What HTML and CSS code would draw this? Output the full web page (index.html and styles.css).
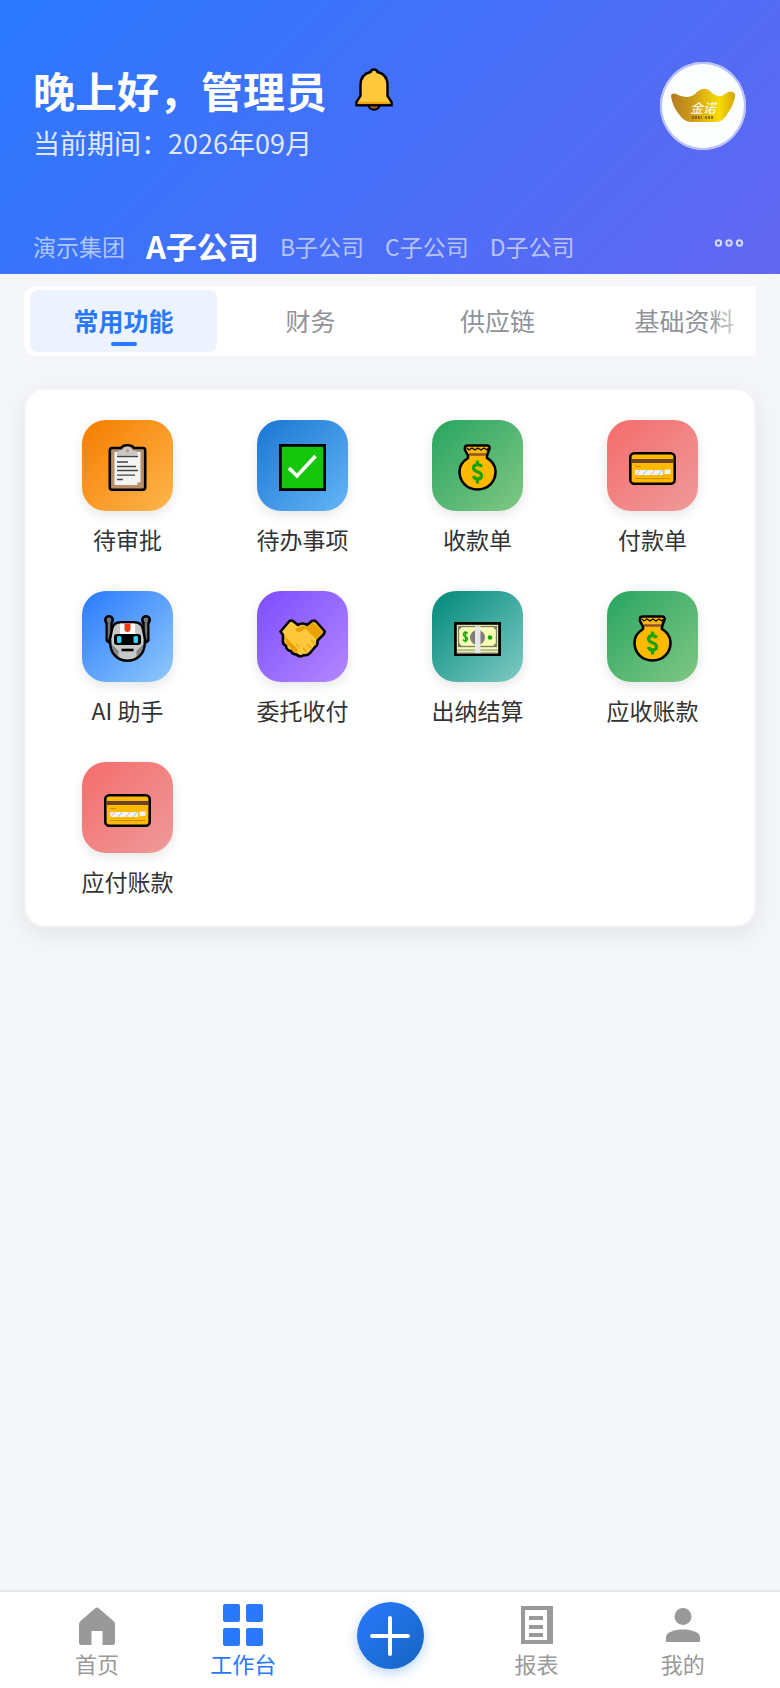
FILE: index.html
```html
<!DOCTYPE html>
<html lang="zh-CN">
<head>
  <meta charset="UTF-8" />
  <meta name="viewport" content="width=device-width, initial-scale=1" />
  <title>工作台</title>
  <link rel="stylesheet" href="styles.css">
</head>
<body>
  <!-- 公用图标 -->
  <svg class="sprite" aria-hidden="true">
    <symbol id="icon-bag" viewBox="0 0 47 47">
      <path d="M11 3.500Q11 1.500 14 1.500H33Q36 1.500 35.500 4.500L33 11.500V14C39 17.500 41.500 22 41.500 27.500C41.500 38 34 45.500 23.500 45.500S5.500 38 5.500 27.500C5.500 22 8.500 17.500 14 14V11.500L11 6Z" fill="#ffb900" stroke="#000" stroke-width="2.600" stroke-linejoin="round"/>
      <path d="M13 4l2 2 3-2 3 2 3-2 3 2 3-2 3 2 1-2" fill="none" stroke="#000" stroke-width="1.300"/>
      <path d="M15 10.500h17" stroke="#8e562e" stroke-width="2.500"/>
      <path d="M27.500 23C26 19.500 19.500 20 19.500 24C19.500 28.500 27.500 27 27.500 31.500C27.500 36 20.500 36 19.500 32M23.500 16.500v4.500M23.500 34.500v5" fill="none" stroke="#16a30c" stroke-width="3.200"/>
    </symbol>
    <symbol id="icon-card" viewBox="0 0 47 47">
      <rect x="1.300" y="9.300" width="44.400" height="30.400" rx="4" fill="#ffb900" stroke="#000" stroke-width="2.600"/>
      <path d="M2.600 17h41.800" stroke="#6b4029" stroke-width="4"/>
      <path d="M6 22.500h6M6 34.500h35" stroke="#d18b00" stroke-width="1"/>
      <path d="M6 28.500h28M35.500 28h6" stroke="#f2f2f2" stroke-width="5"/>
      <path d="M7 31l4-5M22 31l4-5" stroke="#f5aaa2" stroke-width="1"/>
      <path d="M14 31l4-5M29 31l4-5" stroke="#81c9f0" stroke-width="1"/>
      <path d="M35 31.200h7" stroke="#ffb900" stroke-width="2"/>
    </symbol>
  </svg>

  <header class="header">
    <div class="header-top">
      <div class="greeting">
        <div class="greeting-line">
          <h1>晚上好，管理员</h1>
          <button class="bell" type="button" aria-label="消息">
            <svg viewBox="0 0 38 43" width="38" height="43">
              <path d="M14 37.500a5 4 0 0 0 10 0z" fill="#8e562e" stroke="#000" stroke-width="2.400"/>
              <path d="M1.400 37.300V34L5.500 28V17C5.500 10 9 5.500 15.500 4C16 .600 22 .600 22.500 4C29 5.500 32.500 10 32.500 17V28L36.600 34V37.300Z" fill="#ffc83d" stroke="#000" stroke-width="2.400"/>
              <path d="M3 35h32" stroke="#f2a20c" stroke-width="2.200"/>
              <path d="M15 38.300a4 2.500 0 0 0 8 0z" fill="#8e562e"/>
            </svg>
          </button>
        </div>
        <p class="period">当前期间：2026年09月</p>
      </div>
      <button class="avatar" type="button" aria-label="个人头像">
        <svg viewBox="0 0 86 88" width="86" height="88">
          <defs>
            <linearGradient id="gold">
              <stop offset="0" stop-color="#b27c24"/>
              <stop offset=".35" stop-color="#cf9e16"/>
              <stop offset=".75" stop-color="#f7dc05"/>
              <stop offset="1" stop-color="#d5a50a"/>
            </linearGradient>
          </defs>
          <path d="M11 34Q11 31 15 31.500Q22 35 28 35Q34 34 37 30Q44 24 50 29Q55 35 62 34Q66 30 71 29.500Q76 30 75 35Q73 44 68 51Q63 60 56 60H31Q24 60 18 51Q12 43 11 34Z" fill="url(#gold)"/>
          <text class="avatar-name" x="43" y="51" text-anchor="middle">金诺</text>
          <path d="M32 55.500h10M45 55.500h9" stroke="#8c5a1c" stroke-width="2.500" stroke-dasharray="2 1"/>
        </svg>
      </button>
    </div>

    <div class="companies">
      <button type="button">演示集团</button>
      <button type="button" class="current">A子公司</button>
      <button type="button">B子公司</button>
      <button type="button">C子公司</button>
      <button type="button">D子公司</button>
      <button type="button" class="more" aria-label="更多">
        <svg viewBox="0 0 30 10" width="30" height="10" fill="none" stroke="currentColor" stroke-width="2">
          <circle cx="4.500" cy="5" r="2.700"/>
          <circle cx="15" cy="5" r="2.700"/>
          <circle cx="25.500" cy="5" r="2.700"/>
        </svg>
      </button>
    </div>
  </header>

  <main class="content">
    <div class="tabs">
      <button type="button" class="tab active">常用功能</button>
      <button type="button" class="tab">财务</button>
      <button type="button" class="tab">供应链</button>
      <button type="button" class="tab">基础资料</button>
    </div>

    <section class="grid">
      <a class="item" href="#">
        <span class="tile orange">
          <svg viewBox="0 0 47 47">
            <path d="M17 4Q18.500 1.300 23.500 1.300T30 4H39Q41.200 4 41.200 6.500V43Q41.200 45.700 39 45.700H8Q5.800 45.700 5.800 43V6.500Q5.800 4 8 4Z" fill="#b98f69" stroke="#000" stroke-width="2.600"/>
            <path d="M10.500 8H36.500V37.500L33 41H10.500Z" fill="#f3f3f3"/>
            <path d="M33 41V38.500H36.500Z" fill="#b8a08b"/>
            <path d="M13 11.500V7.500L18 6Q20 2.500 23.500 2.500T28 6L33.500 7.500V11.500Z" fill="#c8c8c8"/>
            <circle cx="23.500" cy="6.800" r="1.500" fill="#c19068"/>
            <path d="M13 12.500h21M13 18h11M13 22.500h19M13 26.500h21M13 31.200h18M13 35.500h6" stroke="#444" stroke-width="1.300"/>
          </svg>
        </span>
        <span class="label">待审批</span>
      </a>
      <a class="item" href="#">
        <span class="tile blue">
          <svg viewBox="0 0 47 47">
            <rect x="1.400" y="1.400" width="44.200" height="44.200" fill="#16c60c" stroke="#000" stroke-width="2.800"/>
            <path d="M10 24l8 8L36.500 12" fill="none" stroke="#fff" stroke-width="3.600"/>
          </svg>
        </span>
        <span class="label">待办事项</span>
      </a>
      <a class="item" href="#">
        <span class="tile green"><svg><use href="#icon-bag"/></svg></span>
        <span class="label">收款单</span>
      </a>
      <a class="item" href="#">
        <span class="tile red"><svg><use href="#icon-card"/></svg></span>
        <span class="label">付款单</span>
      </a>
      <a class="item" href="#">
        <span class="tile sky">
          <svg viewBox="0 0 47 47">
            <path d="M5 6V24.500L7 26M42 6V24.500L40 26" fill="none" stroke="#000" stroke-width="7"/>
            <circle cx="5" cy="5" r="5" fill="#000"/>
            <circle cx="42" cy="5" r="5" fill="#000"/>
            <path d="M5 6V24.500M42 6V24.500" stroke="#767676" stroke-width="2.600"/>
            <circle cx="5" cy="5" r="2.400" fill="#777"/>
            <circle cx="42" cy="5" r="2.400" fill="#777"/>
            <path d="M8 14Q9 7.300 17 7.300H30Q38 7.300 39 14L41 24Q41 33 38 38Q33 45.700 23.500 45.700T9 38Q6 33 6 24Z" fill="#c8c8c8" stroke="#000" stroke-width="2.600"/>
            <path d="M7.500 29Q8 37 14.500 42V36ZM39.500 29Q39 37 32.500 42V36Z" fill="#858585"/>
            <path d="M16 8.600h15v11H16z" fill="#fff"/>
            <path d="M20.500 8.600h6V14a3 3 0 0 1-6 0z" fill="#f03a17"/>
            <rect x="10" y="19" width="27" height="11" rx="3" fill="#000"/>
            <rect x="13" y="21" width="4.500" height="7" rx="1.500" fill="#31d2f7"/>
            <rect x="29.500" y="21" width="4.500" height="7" rx="1.500" fill="#31d2f7"/>
            <path d="M17.500 35h12" stroke="#000" stroke-width="2.600"/>
          </svg>
        </span>
        <span class="label">AI 助手</span>
      </a>
      <a class="item" href="#">
        <span class="tile purple">
          <svg viewBox="0 0 47 47">
            <path d="M1.500 16.500L10.500 6Q12 5 14 6L19 10Q23.500 7 28 10L33 6Q35 5 37 6.500L45.500 16Q46 18 44 20L38.500 25.500Q39 30 36 32L31 38Q28 41 25 40Q21 43 17.500 39.500Q13 39 12 36Q7 35 7 31Q3 29 4 24L4 20Z" fill="#ffc83d" stroke="#000" stroke-width="2.600" stroke-linejoin="round"/>
            <path d="M34.500 7.500L44 17L37 24L26.500 13.500L22 16.500Q18 18 16 14.500L23.500 10.500L28 12Z" fill="#e9a200"/>
            <path d="M5.500 21L18.500 34V38L13.500 36L11 32L7.500 29Z" fill="#e9a200"/>
            <path d="M17 29L20 32M32 25l5 5M28 29l5 5M24 33l4 4" stroke="#e9a200" stroke-width="1.200"/>
          </svg>
        </span>
        <span class="label">委托收付</span>
      </a>
      <a class="item" href="#">
        <span class="tile teal">
          <svg viewBox="0 0 47 47">
            <rect x="1.400" y="8.400" width="44.200" height="31.200" fill="#f8ffb2" stroke="#000" stroke-width="2.800"/>
            <path d="M3 35h41" stroke="#817f72" stroke-width="1.200"/>
            <path d="M3 37.600h41" stroke="#b7b59c" stroke-width="1.600"/>
            <rect x="4.500" y="11.500" width="38" height="20" fill="none" stroke="#7d7d73" stroke-width="1.400"/>
            <path d="M4 11h5l-5 5zM43 11h-5l5 5zM4 32h5l-5-5zM43 32h-5l5-5z" fill="#7d7d73"/>
            <ellipse cx="23.500" cy="22.500" rx="7.500" ry="7.500" fill="#7d7d7d"/>
            <path d="M13.500 18.500C12 16 9 17.500 9.500 20C10 22 13.500 21.500 13.500 24C13 27 10 26.500 9 24.500M11.500 16v11.500" fill="none" stroke="#16a30c" stroke-width="1.500"/>
            <circle cx="36" cy="22.500" r="2.300" fill="#16a30c"/>
            <path d="M21 11.200h5.500V38H21z" fill="#e6e6e6"/>
          </svg>
        </span>
        <span class="label">出纳结算</span>
      </a>
      <a class="item" href="#">
        <span class="tile green"><svg><use href="#icon-bag"/></svg></span>
        <span class="label">应收账款</span>
      </a>
      <a class="item" href="#">
        <span class="tile red"><svg><use href="#icon-card"/></svg></span>
        <span class="label">应付账款</span>
      </a>
    </section>
  </main>

  <nav class="navbar">
    <a href="#">
      <svg viewBox="0 0 48 48"><path d="M22 7.500Q24 5.500 26 7.500L40.500 20Q42 21.500 42 23V41.500Q42 44 39.500 44H29.500V30H18.500V44H8.500Q6 44 6 41.500V23Q6 21.500 7.500 20Z"/></svg>
      <span>首页</span>
    </a>
    <a href="#" class="active">
      <svg viewBox="0 0 48 48">
        <rect x="4" y="3" width="17" height="18" rx="2"/>
        <rect x="27" y="3" width="17" height="18" rx="2"/>
        <rect x="4" y="27" width="17" height="18" rx="2"/>
        <rect x="27" y="27" width="17" height="18" rx="2"/>
      </svg>
      <span>工作台</span>
    </a>
    <button type="button" aria-label="新增">
      <svg viewBox="0 0 40 40"><path d="M20 2v36M2 20h36"/></svg>
    </button>
    <a href="#">
      <svg viewBox="0 0 48 48"><path fill-rule="evenodd" d="M8 5H40V43H8ZM12 9V39H34V9ZM16 15H30V19H16ZM16 24H30V28H16ZM16 32H30V36H16Z"/></svg>
      <span>报表</span>
    </a>
    <a href="#">
      <svg viewBox="0 0 48 48"><circle cx="24" cy="15.500" r="8.500"/><path d="M7 41V36C7 31 16 28.500 24 28.500S41 31 41 36V41Z"/></svg>
      <span>我的</span>
    </a>
  </nav>
</body>
</html>
```
FILE: styles.css
```css
* {
  box-sizing: border-box;
}
body {
  margin: 0;
  min-height: 100vh;
  display: flex;
  flex-direction: column;
  background: #f4f6fa;
  color: #333;
  font-family: "Noto Sans CJK SC", sans-serif;
}
button {
  padding: 0;
  border: 0;
  background: none;
  color: inherit;
  font: inherit;
  cursor: pointer;
}
a {
  color: inherit;
  text-decoration: none;
}
svg {
  display: block;
}
.sprite {
  position: absolute;
  width: 0;
  height: 0;
}

/* 顶部 */
.header {
  padding: 62px 34px 6px 33px;
  background: linear-gradient(135deg, #2979ff, #6366f1);
  color: #fff;
}
.header-top {
  display: flex;
  justify-content: space-between;
  align-items: flex-start;
}
.greeting-line {
  display: flex;
  align-items: center;
  gap: 28px;
  height: 56px;
}
h1 {
  margin: 0;
  font-size: 42px;
  line-height: 56px;
  font-weight: bold;
}
.bell {
  padding-bottom: 2px;
}
.period {
  margin: 0;
  font-size: 27px;
  line-height: 50px;
  color: rgba(255,255,255,0.85);
}
.avatar {
  border-radius: 50%;
  background: #fdfffe;
  box-shadow: inset 0 0 0 2px #b9c1fa;
}
.avatar-name {
  font-size: 13px;
  font-style: italic;
  fill: #fff;
}
.companies {
  display: flex;
  align-items: center;
  gap: 21px;
  margin-top: 56px;
  font-size: 23px;
  line-height: 44px;
  color: rgba(255,255,255,0.6);
}
.companies .current {
  font-size: 31px;
  font-weight: bold;
  color: #fff;
}
.companies .more {
  margin-left: auto;
  padding: 0 2px 6px 0;
  color: rgba(255,255,255,0.75);
}

/* 分类标签 */
.content {
  flex: 1;
  padding: 12px 24px;
}
.tabs {
  position: relative;
  display: flex;
  padding: 4px 6px;
  background: #fff;
  border-radius: 12px 0 0 12px;
  overflow: hidden;
}
.tabs::after {
  content: "";
  position: absolute;
  top: 0;
  right: 0;
  bottom: 0;
  width: 48px;
  background: linear-gradient(to right, rgba(255,255,255,0), #fff);
}
.tab {
  position: relative;
  flex: 0 0 187px;
  height: 62px;
  padding-bottom: 2px;
  border-radius: 8px;
  font-size: 25px;
  color: #909399;
}
.tab.active {
  background: #ecf3ff;
  color: #2979ff;
  font-weight: bold;
}
.tab.active::after {
  content: "";
  position: absolute;
  left: 50%;
  bottom: 6px;
  width: 26px;
  height: 4px;
  margin-left: -13px;
  border-radius: 2px;
  background: #2979ff;
}

/* 功能宫格 */
.grid {
  display: grid;
  grid-template-columns: repeat(4, 1fr);
  row-gap: 36px;
  margin-top: 32px;
  padding: 30px 14px 28px;
  background: #fff;
  border: 2px solid #f5f5f5;
  border-radius: 20px;
  box-shadow: 0 8px 24px rgba(0,0,0,0.08);
}
.item {
  display: flex;
  flex-direction: column;
  align-items: center;
  gap: 12px;
}
.tile {
  display: flex;
  align-items: center;
  justify-content: center;
  width: 91px;
  height: 91px;
  padding-top: 4px;
  border-radius: 24px;
  box-shadow: 0 4px 12px rgba(0,0,0,0.1);
}
.tile svg {
  width: 47px;
  height: 47px;
}
.orange { background: linear-gradient(135deg, #f57c00, #ffb74d); }
.blue { background: linear-gradient(135deg, #1976d2, #64b5f6); }
.green { background: linear-gradient(135deg, #27a561, #81c784); }
.red { background: linear-gradient(135deg, #f56c6c, #ef9a9a); }
.sky { background: linear-gradient(135deg, #2979ff, #90caf9); }
.purple { background: linear-gradient(135deg, #7c4dff, #b388ff); }
.teal { background: linear-gradient(135deg, #00897b, #80cbc4); }
.label {
  font-size: 23px;
  line-height: 32px;
}

/* 底部导航 */
.navbar {
  display: flex;
  padding: 9px 24px 11px;
  background: #fff;
  border-top: 2px solid #e4e5e8;
}
.navbar a {
  flex: 1;
  display: flex;
  flex-direction: column;
  align-items: center;
  font-size: 22px;
  line-height: 28px;
  color: #999;
}
.navbar a.active {
  color: #2979ff;
}
.navbar a svg {
  width: 48px;
  height: 48px;
  fill: currentColor;
}
.navbar button {
  display: flex;
  align-items: center;
  justify-content: center;
  width: 67px;
  height: 67px;
  margin: 1px 40px 0;
  border-radius: 50%;
  background: linear-gradient(135deg, #2979ff, #1565c0);
  box-shadow: 0 4px 12px rgba(25,118,210,0.3);
}
.navbar button svg {
  width: 40px;
  height: 40px;
  fill: none;
  stroke: #fff;
  stroke-width: 4;
  stroke-linecap: round;
}
```
